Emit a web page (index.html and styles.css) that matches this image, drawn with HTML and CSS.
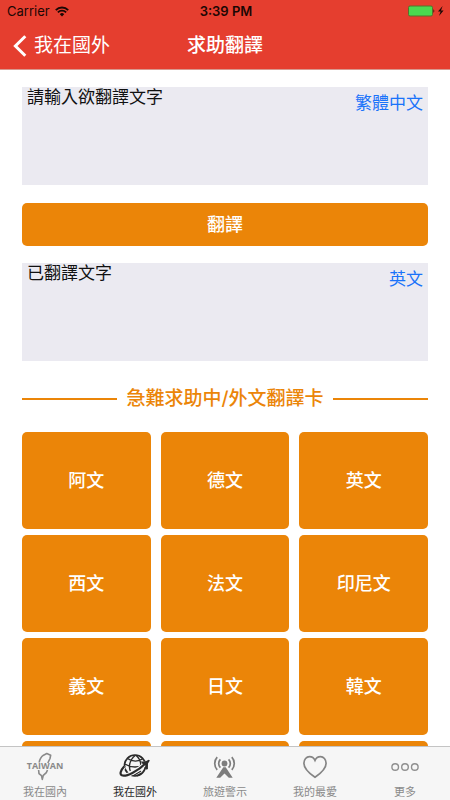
FILE: index.html
```html
<!DOCTYPE html>
<html lang="zh-Hant">
<head>
<meta charset="utf-8">
<meta name="viewport" content="width=device-width, initial-scale=1">
<title>求助翻譯</title>
<link rel="stylesheet" href="styles.css">
</head>
<body>
<header class="header">
  <div class="status">
    <div class="status-left">
      <span>Carrier</span>
      <svg width="14" height="11" viewBox="0 0 14 11" aria-hidden="true">
        <path d="M.8 4.1a8.8 8.8 0 0 1 12.4 0M2.9 6.3a5.8 5.8 0 0 1 8.2 0" fill="none" stroke="#1b0704" stroke-width="1.9"/>
        <path d="M7 10.6 4.8 8.2a3.1 3.1 0 0 1 4.4 0z" fill="#1b0704"/>
      </svg>
    </div>
    <time class="clock">3:39 PM</time>
    <div class="status-right">
      <svg width="37" height="12" viewBox="0 0 37 12" aria-hidden="true">
        <rect x="0.5" y="1" width="24" height="10" rx="1.5" fill="#4bd84f" stroke="#56702c" stroke-width="1"/>
        <path d="M25.5 4q1.8 2 0 4z" fill="#1b0704"/>
        <path d="M34.6 1 30 6.6h2.6L31 11l4.6-5.6h-2.6z" fill="#1b0704"/>
      </svg>
    </div>
  </div>
  <nav class="nav">
    <a class="back" href="#">
      <svg width="14" height="22" viewBox="0 0 14 22" aria-hidden="true"><path d="M12.3 1.3 2.4 11l9.9 9.7" fill="none" stroke="#fff" stroke-width="3"/></svg>
      <span>我在國外</span>
    </a>
    <h1 class="title">求助翻譯</h1>
  </nav>
</header>

<main class="content">
  <div class="field">
    <textarea class="field-text" aria-label="請輸入欲翻譯文字">請輸入欲翻譯文字</textarea>
    <button class="lang" type="button">繁體中文</button>
  </div>
  <button class="translate" type="button">翻譯</button>
  <div class="field">
    <textarea class="field-text" aria-label="已翻譯文字" readonly>已翻譯文字</textarea>
    <button class="lang" type="button">英文</button>
  </div>
  <h2 class="section">急難求助中/外文翻譯卡</h2>
  <div class="cards">
    <button class="card" type="button">阿文</button>
    <button class="card" type="button">德文</button>
    <button class="card" type="button">英文</button>
    <button class="card" type="button">西文</button>
    <button class="card" type="button">法文</button>
    <button class="card" type="button">印尼文</button>
    <button class="card" type="button">義文</button>
    <button class="card" type="button">日文</button>
    <button class="card" type="button">韓文</button>
    <button class="card" type="button"></button>
    <button class="card" type="button"></button>
    <button class="card" type="button"></button>
  </div>
</main>

<nav class="tabs">
  <a class="tab" href="#">
    <svg width="38" height="30" viewBox="0 0 38 30" aria-hidden="true">
      <path d="M13.2 10.5c.4-3 1.800-5.500 4.300-7.300l3.300-1.700 3.900 1.700-.7 3.300-2.200 4.500M12.600 18l.4 3.600 2.500 2 .8 3.800 1-4 3-2.800 1.200-2.600" fill="none" stroke="#8a8a8a" stroke-width="1.600" stroke-linejoin="round"/>
      <text x="19" y="17" text-anchor="middle" class="taiwan">TAIWAN</text>
    </svg>
    <span>我在國內</span>
  </a>
  <a class="tab tab-active" href="#">
    <svg width="32" height="30" viewBox="0 -2 32 30" aria-hidden="true" fill="none" stroke="#2b2b2b">
      <circle cx="16" cy="11.500" r="10.500" stroke-width="1.700"/>
      <path d="M8.500 4.500q3.500 2.600 8 2.600t7.500-2.600M5.800 10q4.700 3 10.200 3t9.800-3M16.500 1.200q-5.500 4.300-6 10.300-.2 3 .8 5.500M17 1.200q4.500 4 4.700 9 0 3.500-1.600 6.300M14.500 21.500l7.500-4.500M18 21.800l4.500-2.800" stroke-width="1.400"/>
      <path d="M5.300 12.200C1.400 16.500.6 20.500 2.800 21.300c4.200 1.700 16-4 24.200-12.300" stroke="#f6f6f6" stroke-width="4.400"/>
      <path d="M5.300 12.200C1.400 16.500.6 20.500 2.800 21.300c4.200 1.700 16-4 24.200-12.300" stroke-width="2.200"/>
      <path d="M21.800 7.400l4.600.2 3.200-1.800 1.300.8-1.900 2.800-.1 5.600-1.600.8-1.100-4.600-2.800-1.500z" fill="#2b2b2b" stroke="none"/>
    </svg>
    <span>我在國外</span>
  </a>
  <a class="tab" href="#">
    <svg width="24" height="30" viewBox="0 -2 24 30" aria-hidden="true" fill="none" stroke="#7d7d7d" stroke-width="1.700">
      <circle cx="11.500" cy="9.500" r="2.900" fill="#7d7d7d" stroke="none"/>
      <path d="M7.400 5.300a6 6 0 0 0 0 8.400M15.600 5.300a6 6 0 0 1 0 8.400M4.200 3.200a9.300 9.300 0 0 0 0 12.600M18.800 3.200a9.300 9.300 0 0 1 0 12.600"/>
      <path d="M10.300 13.200h2.400l7 10.600h-3.900l-4.300-4.400-4.300 4.400H3.300z" fill="#7d7d7d" stroke="none"/>
    </svg>
    <span>旅遊警示</span>
  </a>
  <a class="tab" href="#">
    <svg width="26" height="30" viewBox="0 -2 26 30" aria-hidden="true">
      <path d="M13 23.300C7.500 19.500 1.900 14.800 1.900 9.200c0-3.900 2.600-6.600 5.600-6.600 2.600 0 4.500 1.500 5.500 3.800 1-2.300 2.900-3.800 5.500-3.800 3 0 5.600 2.700 5.600 6.600 0 5.600-5.600 10.300-11.100 14.100z" fill="none" stroke="#858585" stroke-width="1.700"/>
    </svg>
    <span>我的最愛</span>
  </a>
  <a class="tab" href="#">
    <svg width="28" height="30" viewBox="0 -2 28 30" aria-hidden="true" fill="none" stroke="#8f8f8f" stroke-width="1.400">
      <circle cx="4.200" cy="13" r="3.300"/><circle cx="14" cy="13" r="3.300"/><circle cx="23.800" cy="13" r="3.300"/>
    </svg>
    <span>更多</span>
  </a>
</nav>
</body>
</html>
```
FILE: styles.css
```css
* {
  box-sizing: border-box;
}

html,
body {
  height: 100%;
}

body {
  display: flex;
  flex-direction: column;
  margin: 0;
  overflow: hidden;
  background: #fff;
  font-family: Inter, "Noto Sans CJK TC", sans-serif;
}

button,
textarea {
  margin: 0;
  border: 0;
  font-family: inherit;
}

a {
  color: inherit;
  text-decoration: none;
}

.header {
  flex: none;
  background: #e53e2f;
  border-bottom: 1px solid #d9998f;
}

.status,
.nav {
  display: grid;
  grid-template-columns: 1fr auto 1fr;
  align-items: center;
}

.status {
  height: 22px;
  padding: 0 5px 0 7px;
  color: #1b0704;
  font-size: 13px;
}

.status-left {
  display: flex;
  align-items: center;
  gap: 5px;
}

.status-right {
  display: flex;
  justify-content: flex-end;
}

.clock {
  font-weight: 600;
}

.nav {
  height: 47px;
  padding: 0 13px;
  color: #fff;
  font-size: 19px;
  line-height: 24px;
}

.back {
  display: flex;
  align-items: center;
  gap: 7px;
}

.title {
  margin: 0;
  font-size: 19px;
  font-weight: 500;
}

.content {
  flex: 1;
  min-height: 0;
  overflow: hidden;
  padding: 17px 22px 0;
}

.field {
  display: flex;
  align-items: flex-start;
  height: 98px;
  padding: 0 5px;
  background: #ebeaf1;
}

.field-text {
  flex: 1;
  min-width: 0;
  height: 100%;
  padding: 0;
  background: transparent;
  color: #111;
  font-size: 17px;
  line-height: 20px;
  resize: none;
  outline: 0;
}

.lang {
  padding: 4px 0;
  background: transparent;
  color: #1a73fa;
  font-size: 17px;
  line-height: 24px;
}

.translate,
.card {
  padding: 0 0 3px;
  border-radius: 5px;
  background: #eb8508;
  color: #fff;
  font-size: 18px;
  font-weight: 500;
}

.translate {
  display: block;
  width: 100%;
  height: 43px;
  margin: 18px 0 17px;
}

.section {
  display: flex;
  align-items: center;
  gap: 9px;
  margin: 24px 0 20px;
  color: #eb8508;
  font-size: 19px;
  font-weight: 500;
  line-height: 27px;
}

.section::before,
.section::after {
  content: "";
  flex: 1;
  height: 2px;
  background: #eb8508;
}

.cards {
  display: grid;
  grid-template-columns: repeat(3, 1fr);
  grid-auto-rows: 97px;
  gap: 6px 10px;
}

.tabs {
  display: flex;
  flex: none;
  height: 54px;
  border-top: 1px solid #c4c4c4;
  background: #f6f6f6;
}

.tab {
  display: flex;
  flex: 1;
  flex-direction: column;
  align-items: center;
  gap: 2px;
  padding-top: 5px;
  color: #8a8a8a;
  font-size: 11px;
  line-height: 16px;
}

.tab-active {
  color: #2b2b2b;
}

.taiwan {
  fill: #8a8a8a;
  font-family: "Open Sans", sans-serif;
  font-size: 9px;
  font-weight: 700;
}
```
